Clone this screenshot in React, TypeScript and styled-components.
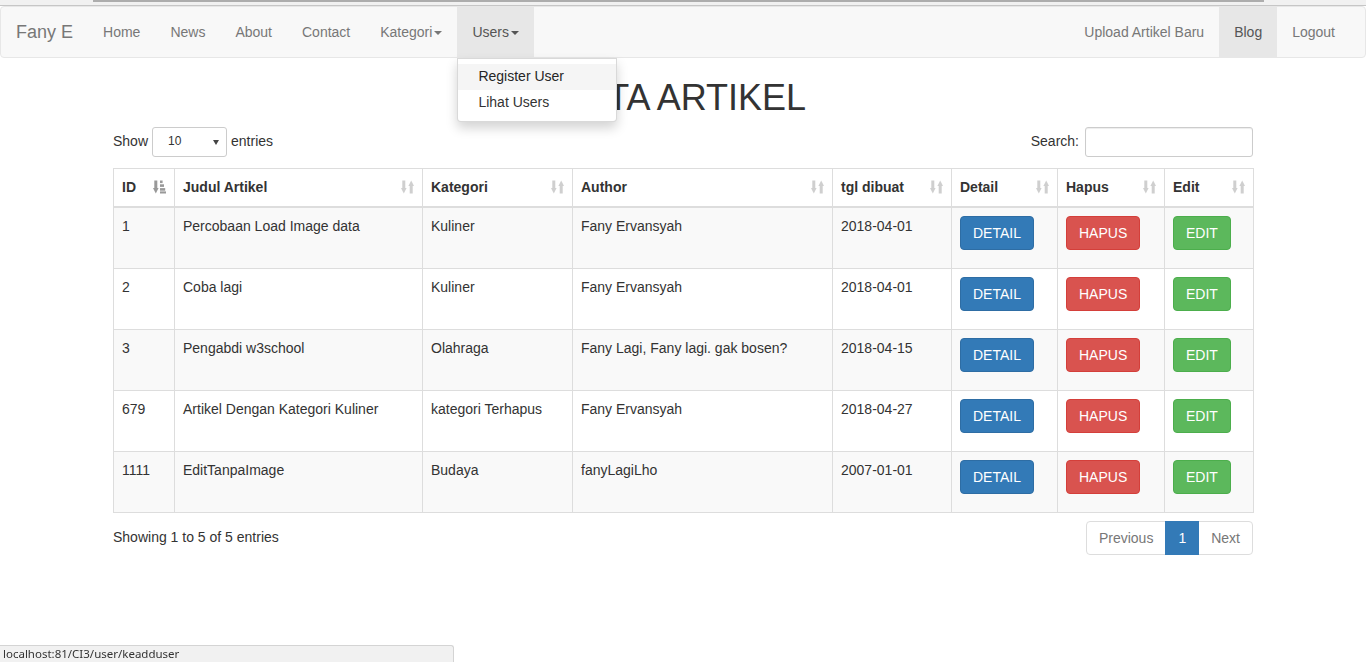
import React from "react";
import styled, { createGlobalStyle } from "styled-components";

const GlobalStyle = createGlobalStyle`
  * { box-sizing: border-box; }
  html, body { margin: 0; padding: 0; background: #fff; }
  body {
    font-family: "Liberation Sans", Arial, Helvetica, sans-serif;
    font-size: 14px;
    line-height: 1.428571;
    color: #333;
  }
  ul { list-style: none; margin: 0; padding: 0; }
`;

const TopStrip = styled.div`
  height: 6px;
  background: #f1f1f1;
  border-bottom: 1px solid #c6c6c6;
  padding-left: 93px;
`;

const ScrollThumb = styled.div`
  width: 1171px;
  height: 2px;
  background: #adadad;
`;

const Navbar = styled.nav`
  display: flex;
  justify-content: space-between;
  height: 52px;
  background: #f8f8f8;
  border: 1px solid #e7e7e7;
  border-radius: 4px;
  padding-right: 15px;
`;

const Brand = styled.a`
  display: block;
  height: 50px;
  padding: 15px;
  font-size: 18px;
  line-height: 20px;
  color: #777;
  text-decoration: none;
`;

const NavGroup = styled.ul`
  display: flex;
`;

const LeftSide = styled.div`
  display: flex;
`;

const NavItem = styled.li`
  position: relative;
`;

const NavLink = styled.a<{ $active?: boolean }>`
  display: block;
  height: 50px;
  padding: 15px;
  line-height: 20px;
  color: ${(p) => (p.$active ? "#555" : "#777")};
  background: ${(p) => (p.$active ? "#e7e7e7" : "transparent")};
  text-decoration: none;
  white-space: nowrap;
`;

const Caret = styled.span`
  display: inline-block;
  width: 0;
  height: 0;
  margin-left: 2px;
  vertical-align: middle;
  border-top: 4px solid;
  border-right: 4px solid transparent;
  border-left: 4px solid transparent;
`;

const DropdownMenu = styled.ul`
  position: absolute;
  top: 100%;
  left: 0;
  z-index: 1000;
  min-width: 160px;
  margin-top: 1px;
  padding: 5px 0;
  background: #fff;
  border: 1px solid rgba(0, 0, 0, 0.15);
  border-radius: 0 0 4px 4px;
  box-shadow: 0 6px 12px rgba(0, 0, 0, 0.175);
`;

const DropItem = styled.a<{ $hover?: boolean }>`
  display: block;
  padding: 3px 20px;
  line-height: 1.428571;
  color: ${(p) => (p.$hover ? "#262626" : "#333")};
  background: ${(p) => (p.$hover ? "#f5f5f5" : "transparent")};
  white-space: nowrap;
  text-decoration: none;
`;

const Container = styled.div`
  width: 1140px;
  margin: 0 auto;
`;

const Title = styled.h1`
  margin: 20px 0 10px;
  font-size: 36px;
  font-weight: 500;
  line-height: 39px;
  text-align: center;
  color: #333;
`;

const ControlsRow = styled.div`
  display: flex;
  justify-content: space-between;
  align-items: center;
  height: 30px;
`;

const ControlLabel = styled.label`
  display: flex;
  align-items: center;
  gap: 4px;
  white-space: nowrap;
`;

const FakeSelect = styled.div`
  display: flex;
  align-items: center;
  justify-content: space-between;
  width: 75px;
  height: 30px;
  padding: 0 7px 0 15px;
  font-size: 12px;
  border: 1px solid #ccc;
  border-radius: 3px;
  background: #fff;
  color: #333;
`;

const SelectArrow = styled.span`
  width: 0;
  height: 0;
  border-top: 5px solid #444;
  border-left: 3px solid transparent;
  border-right: 3px solid transparent;
  margin-top: 1px;
`;

const SearchInput = styled.input`
  width: 168px;
  height: 30px;
  margin-left: 2px;
  padding: 5px 10px;
  font-size: 12px;
  border: 1px solid #ccc;
  border-radius: 3px;
  box-shadow: inset 0 1px 1px rgba(0, 0, 0, 0.075);
  outline: none;
`;

const Table = styled.table`
  width: 100%;
  margin-top: 11px;
  border-collapse: collapse;
  border-spacing: 0;
  table-layout: fixed;
  border: 1px solid #ddd;
`;

const Col = styled.col<{ $w: number }>`
  width: ${(p) => p.$w}px;
`;

const Th = styled.th`
  box-sizing: content-box;
  height: 20px;
  padding: 8px 8px 9px;
  text-align: left;
  font-weight: bold;
  vertical-align: top;
  border: 1px solid #ddd;
  border-bottom: 2px solid #ddd;
  line-height: 20px;
`;

const HeadInner = styled.div`
  display: flex;
  justify-content: space-between;
  align-items: center;
`;

const SortIcon = styled.svg<{ $active?: boolean }>`
  width: 13px;
  height: 14px;
  flex: none;
  fill: ${(p) => (p.$active ? "#999" : "#cfcfcf")};
`;

const Tr = styled.tr<{ $striped?: boolean }>`
  background: ${(p) => (p.$striped ? "#f9f9f9" : "#fff")};
`;

const Td = styled.td`
  box-sizing: content-box;
  height: 44px;
  padding: 8px;
  vertical-align: top;
  border: 1px solid #ddd;
  line-height: 20px;
`;

const variants = {
  primary: { bg: "#337ab7", border: "#2e6da4" },
  danger: { bg: "#d9534f", border: "#d43f3a" },
  success: { bg: "#5cb85c", border: "#4cae4c" },
};

const Btn = styled.a<{ $v: keyof typeof variants }>`
  display: inline-block;
  height: 34px;
  padding: 6px 12px;
  font-size: 14px;
  line-height: 20px;
  color: #fff;
  background: ${(p) => variants[p.$v].bg};
  border: 1px solid ${(p) => variants[p.$v].border};
  border-radius: 4px;
  text-decoration: none;
  vertical-align: top;
`;

const FooterRow = styled.div`
  display: flex;
  justify-content: space-between;
  align-items: flex-start;
  margin-top: 6px;
`;

const Info = styled.div`
  padding-top: 9px;
  white-space: nowrap;
`;

const Pagination = styled.ul`
  display: flex;
  margin-top: 2px;
`;

const PageLink = styled.a<{ $active?: boolean; $disabled?: boolean; $first?: boolean; $last?: boolean }>`
  display: block;
  height: 34px;
  padding: 6px 12px;
  line-height: 20px;
  margin-left: ${(p) => (p.$first ? "0" : "-1px")};
  color: ${(p) => (p.$active ? "#fff" : p.$disabled ? "#777" : "#337ab7")};
  background: ${(p) => (p.$active ? "#337ab7" : "#fff")};
  border: 1px solid ${(p) => (p.$active ? "#337ab7" : "#ddd")};
  border-radius: ${(p) => (p.$first ? "4px 0 0 4px" : p.$last ? "0 4px 4px 0" : "0")};
  position: relative;
  z-index: ${(p) => (p.$active ? 2 : 1)};
  text-decoration: none;
`;

const StatusBar = styled.div`
  position: fixed;
  left: 0;
  bottom: 0;
  width: 454px;
  height: 17px;
  padding: 0 3px;
  background: #f1f1f1;
  border-top: 1px solid #d4d4d4;
  border-right: 1px solid #d4d4d4;
  border-top-right-radius: 3px;
  font-family: "Noto Sans", "Open Sans", sans-serif;
  font-size: 11.5px;
  line-height: 15px;
  color: #333;
  white-space: nowrap;
`;

const SortBoth = () => (
  <SortIcon viewBox="0 0 13 14">
    <rect x="1.3" y="0.5" width="3" height="8.5" />
    <polygon points="0,8 5.6,8 2.8,13.5" />
    <rect x="8.7" y="5" width="3" height="8.5" />
    <polygon points="7.4,6 13,6 10.2,0.5" />
  </SortIcon>
);

const SortAsc = () => (
  <SortIcon viewBox="0 0 13 14" $active>
    <rect x="1.3" y="0.5" width="3" height="8.5" />
    <polygon points="0,8 5.6,8 2.8,13.5" />
    <rect x="7" y="0.5" width="2.6" height="2.6" />
    <rect x="7" y="4.3" width="4" height="2.6" />
    <rect x="7" y="8.1" width="5.2" height="2.6" />
    <rect x="7" y="11.4" width="6" height="2.1" />
  </SortIcon>
);

const columns: { label: string; w: number }[] = [
  { label: "ID", w: 61 },
  { label: "Judul Artikel", w: 248 },
  { label: "Kategori", w: 150 },
  { label: "Author", w: 260 },
  { label: "tgl dibuat", w: 119 },
  { label: "Detail", w: 106 },
  { label: "Hapus", w: 107 },
  { label: "Edit", w: 89 },
];

const rows = [
  ["1", "Percobaan Load Image data", "Kuliner", "Fany Ervansyah", "2018-04-01"],
  ["2", "Coba lagi", "Kuliner", "Fany Ervansyah", "2018-04-01"],
  ["3", "Pengabdi w3school", "Olahraga", "Fany Lagi, Fany lagi. gak bosen?", "2018-04-15"],
  ["679", "Artikel Dengan Kategori Kuliner", "kategori Terhapus", "Fany Ervansyah", "2018-04-27"],
  ["1111", "EditTanpaImage", "Budaya", "fanyLagiLho", "2007-01-01"],
];

export default function App() {
  return (
    <>
      <GlobalStyle />
      <TopStrip>
        <ScrollThumb />
      </TopStrip>
      <Navbar>
        <LeftSide>
          <Brand>Fany E</Brand>
          <NavGroup>
            <NavItem><NavLink>Home</NavLink></NavItem>
            <NavItem><NavLink>News</NavLink></NavItem>
            <NavItem><NavLink>About</NavLink></NavItem>
            <NavItem><NavLink>Contact</NavLink></NavItem>
            <NavItem><NavLink>Kategori<Caret /></NavLink></NavItem>
            <NavItem>
              <NavLink $active>Users<Caret /></NavLink>
              <DropdownMenu>
                <li><DropItem $hover>Register User</DropItem></li>
                <li><DropItem>Lihat Users</DropItem></li>
              </DropdownMenu>
            </NavItem>
          </NavGroup>
        </LeftSide>
        <NavGroup>
          <NavItem><NavLink>Upload Artikel Baru</NavLink></NavItem>
          <NavItem><NavLink $active>Blog</NavLink></NavItem>
          <NavItem><NavLink>Logout</NavLink></NavItem>
        </NavGroup>
      </Navbar>
      <Container>
        <Title>DATA ARTIKEL</Title>
        <ControlsRow>
          <ControlLabel>
            Show
            <FakeSelect>
              <span>10</span>
              <SelectArrow />
            </FakeSelect>
            entries
          </ControlLabel>
          <ControlLabel>
            Search:
            <SearchInput type="search" />
          </ControlLabel>
        </ControlsRow>
        <Table>
          <colgroup>
            {columns.map((c) => (
              <Col key={c.label} $w={c.w} />
            ))}
          </colgroup>
          <thead>
            <tr>
              {columns.map((c, i) => (
                <Th key={c.label}>
                  <HeadInner>
                    <span>{c.label}</span>
                    {i === 0 ? <SortAsc /> : <SortBoth />}
                  </HeadInner>
                </Th>
              ))}
            </tr>
          </thead>
          <tbody>
            {rows.map((r, idx) => (
              <Tr key={r[0]} $striped={idx % 2 === 0}>
                {r.map((cell, j) => (
                  <Td key={j}>{cell}</Td>
                ))}
                <Td><Btn $v="primary">DETAIL</Btn></Td>
                <Td><Btn $v="danger">HAPUS</Btn></Td>
                <Td><Btn $v="success">EDIT</Btn></Td>
              </Tr>
            ))}
          </tbody>
        </Table>
        <FooterRow>
          <Info>Showing 1 to 5 of 5 entries</Info>
          <Pagination>
            <li><PageLink $first $disabled>Previous</PageLink></li>
            <li><PageLink $active>1</PageLink></li>
            <li><PageLink $last $disabled>Next</PageLink></li>
          </Pagination>
        </FooterRow>
      </Container>
      <StatusBar>localhost:81/CI3/user/keadduser</StatusBar>
    </>
  );
}
